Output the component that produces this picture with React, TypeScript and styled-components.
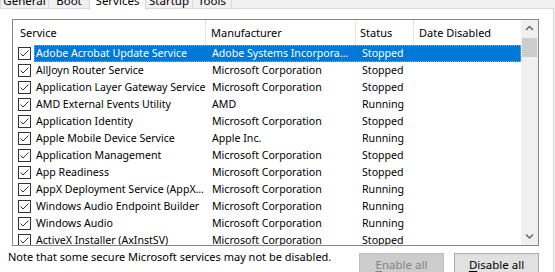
import React from "react";
import styled, { createGlobalStyle } from "styled-components";

type Service = {
  name: string;
  maker: string;
  status: string;
};

const services: Service[] = [
  { name: "Adobe Acrobat Update Service", maker: "Adobe Systems Incorpora…", status: "Stopped" },
  { name: "AllJoyn Router Service", maker: "Microsoft Corporation", status: "Stopped" },
  { name: "Application Layer Gateway Service", maker: "Microsoft Corporation", status: "Stopped" },
  { name: "AMD External Events Utility", maker: "AMD", status: "Running" },
  { name: "Application Identity", maker: "Microsoft Corporation", status: "Stopped" },
  { name: "Apple Mobile Device Service", maker: "Apple Inc.", status: "Running" },
  { name: "Application Management", maker: "Microsoft Corporation", status: "Stopped" },
  { name: "App Readiness", maker: "Microsoft Corporation", status: "Stopped" },
  { name: "AppX Deployment Service (AppX…", maker: "Microsoft Corporation", status: "Running" },
  { name: "Windows Audio Endpoint Builder", maker: "Microsoft Corporation", status: "Running" },
  { name: "Windows Audio", maker: "Microsoft Corporation", status: "Running" },
  { name: "ActiveX Installer (AxInstSV)", maker: "Microsoft Corporation", status: "Stopped" },
];

const tabs = [
  { label: "General", w: 48 },
  { label: "Boot", w: 41 },
  { label: "Services", w: 56 },
  { label: "Startup", w: 47 },
  { label: "Tools", w: 39 },
];

// column widths taken from the header dividers
const COLS = [193, 151, 59, 102];

function App() {
  const [selected, setSelected] = React.useState(0);

  return (
    <>
      <GlobalStyle />
      <Window>
        <TabStrip>
          {tabs.map((t) => (
            <Tab key={t.label} w={t.w} active={t.label === "Services"}>
              {t.label}
            </Tab>
          ))}
        </TabStrip>
        <TabPage>
          <ListView>
            <ListBody>
              <Header>
                <HeaderCell w={COLS[0]} pad={7}>Service</HeaderCell>
                <HeaderCell w={COLS[1]} pad={6}>Manufacturer</HeaderCell>
                <HeaderCell w={COLS[2]} pad={5}>Status</HeaderCell>
                <HeaderCell w={COLS[3]} pad={6}>Date Disabled</HeaderCell>
              </Header>
              {services.map((s, i) => (
                <Row key={s.name} onClick={() => setSelected(i)}>
                  <CheckCell>
                    <CheckBox />
                  </CheckCell>
                  <Selection active={i === selected}>
                    <NameCell>{s.name}</NameCell>
                    <Cell w={COLS[1]} pad={6}>{s.maker}</Cell>
                    <Cell w={COLS[2]} pad={5}>{s.status}</Cell>
                    <Cell w={COLS[3]} pad={6} />
                  </Selection>
                </Row>
              ))}
            </ListBody>
            <ScrollBar>
              <ScrollArrow>
                <Chevron dir="up" />
              </ScrollArrow>
              <Thumb />
              <Track />
              <ScrollArrow>
                <Chevron dir="down" />
              </ScrollArrow>
            </ScrollBar>
          </ListView>
          <BottomBar>
            <Note>Note that some secure Microsoft services may not be disabled.</Note>
            <Buttons>
              <Button disabled>
                <u>E</u>nable all
              </Button>
              <Button>
                <u>D</u>isable all
              </Button>
            </Buttons>
          </BottomBar>
        </TabPage>
      </Window>
    </>
  );
}

function CheckBox() {
  return (
    <svg width="13" height="13" viewBox="0 0 13 13">
      <rect x="0.5" y="0.5" width="12" height="12" fill="#fff" stroke="#333" />
      <polyline points="2.5,6.5 5,9 10.5,3.5" fill="none" stroke="#333" strokeWidth="1" />
    </svg>
  );
}

function Chevron({ dir }: { dir: "up" | "down" }) {
  const pts = dir === "up" ? "1,5 4.5,1.5 8,5" : "1,1.5 4.5,5 8,1.5";
  return (
    <svg width="9" height="7" viewBox="0 0 9 7">
      <polyline points={pts} fill="none" stroke="#606060" strokeWidth="1.4" />
    </svg>
  );
}

const GlobalStyle = createGlobalStyle`
  html, body {
    margin: 0;
    padding: 0;
    background: #ffffff;
  }
  body {
    font-family: "Noto Sans", "Open Sans", sans-serif;
    font-size: 10.6px;
    color: #000;
  }
`;

const Window = styled.div`
  width: 555px;
  height: 272px;
  overflow: hidden;
  display: flex;
  flex-direction: column;
  background: #f0f0f0;
`;

const TabStrip = styled.div`
  display: flex;
  height: 8px;
  align-items: flex-end;
  position: relative;
  z-index: 1;
`;

const Tab = styled.div<{ active?: boolean; w: number }>`
  width: ${({ w }) => w + 1}px;
  height: ${({ active }) => (active ? 19 : 17)}px;
  margin-bottom: ${({ active }) => (active ? -2 : 0)}px;
  line-height: 17px;
  font-size: 11.5px;
  text-align: center;
  border: 1px solid #d9d9d9;
  border-bottom: none;
  margin-right: -1px;
  background: ${({ active }) => (active ? "#ffffff" : "#f0f0f0")};
  white-space: nowrap;
  box-sizing: border-box;
`;

const TabPage = styled.div`
  flex: 1;
  display: flex;
  flex-direction: column;
  background: #ffffff;
  border-top: 1px solid #d9d9d9;
  border-right: 1px solid #d9d9d9;
  margin-right: 1px;
  padding: 10px 14px 0 12px;
`;

const ListView = styled.div`
  height: 227px;
  box-sizing: border-box;
  border: 1px solid #828790;
  display: flex;
  overflow: hidden;
`;

const ListBody = styled.div`
  flex: 1;
  display: flex;
  flex-direction: column;
  overflow: hidden;
`;

const Header = styled.div`
  display: flex;
  height: 25px;
  flex-shrink: 0;
`;

const HeaderCell = styled.div<{ w: number; pad: number }>`
  width: ${({ w }) => w}px;
  padding-left: ${({ pad }) => pad}px;
  box-sizing: border-box;
  line-height: 25px;
  font-size: 11px;
  border-right: 1px solid #e5e5e5;
  margin-right: -1px;
  color: #000;
  &:last-child {
    border-right: none;
    flex: 1;
  }
`;

const Row = styled.div`
  display: flex;
  height: 17px;
  flex-shrink: 0;
  cursor: default;
`;

const CheckCell = styled.div`
  width: 21px;
  padding-left: 5px;
  box-sizing: border-box;
  display: flex;
  align-items: center;
  flex-shrink: 0;
`;

const Selection = styled.div<{ active?: boolean }>`
  flex: 1;
  display: flex;
  box-sizing: border-box;
  background: ${({ active }) => (active ? "#0078d7" : "transparent")};
  color: ${({ active }) => (active ? "#ffffff" : "#000000")};
  outline: ${({ active }) => (active ? "1px dotted #7fb3e6" : "none")};
  outline-offset: -1px;
`;

const Cell = styled.div<{ w: number; pad: number }>`
  width: ${({ w }) => w}px;
  padding-left: ${({ pad }) => pad}px;
  box-sizing: border-box;
  line-height: 17px;
  white-space: nowrap;
  overflow: hidden;
  &:last-child {
    flex: 1;
  }
`;

const NameCell = styled.div`
  width: 172px;
  padding-left: 2px;
  box-sizing: border-box;
  line-height: 17px;
  white-space: nowrap;
  overflow: hidden;
`;

const ScrollBar = styled.div`
  width: 17px;
  flex-shrink: 0;
  background: #f0f0f0;
  display: flex;
  flex-direction: column;
  align-items: center;
`;

const ScrollArrow = styled.div`
  height: 17px;
  width: 17px;
  display: flex;
  align-items: center;
  justify-content: center;
`;

const Thumb = styled.div`
  width: 15px;
  height: 19px;
  margin-top: 1px;
  background: #cdcdcd;
`;

const Track = styled.div`
  flex: 1;
`;

const BottomBar = styled.div`
  display: flex;
  align-items: flex-start;
  justify-content: space-between;
  margin-left: -4px;
`;

const Note = styled.div`
  line-height: 16px;
  margin-top: 3px;
  white-space: nowrap;
  font-size: 11px;
`;

const Buttons = styled.div`
  display: flex;
  gap: 10px;
  margin-top: 7px;
`;

const Button = styled.button`
  width: 85px;
  height: 23px;
  font: inherit;
  font-size: 11.5px;
  padding: 0;
  border: 1px solid ${({ disabled }) => (disabled ? "#bfbfbf" : "#adadad")};
  background: ${({ disabled }) => (disabled ? "#cccccc" : "#e1e1e1")};
  color: ${({ disabled }) => (disabled ? "#838383" : "#000000")};
  u {
    text-decoration-thickness: 1px;
    text-underline-offset: 2px;
  }
`;

export default App;
